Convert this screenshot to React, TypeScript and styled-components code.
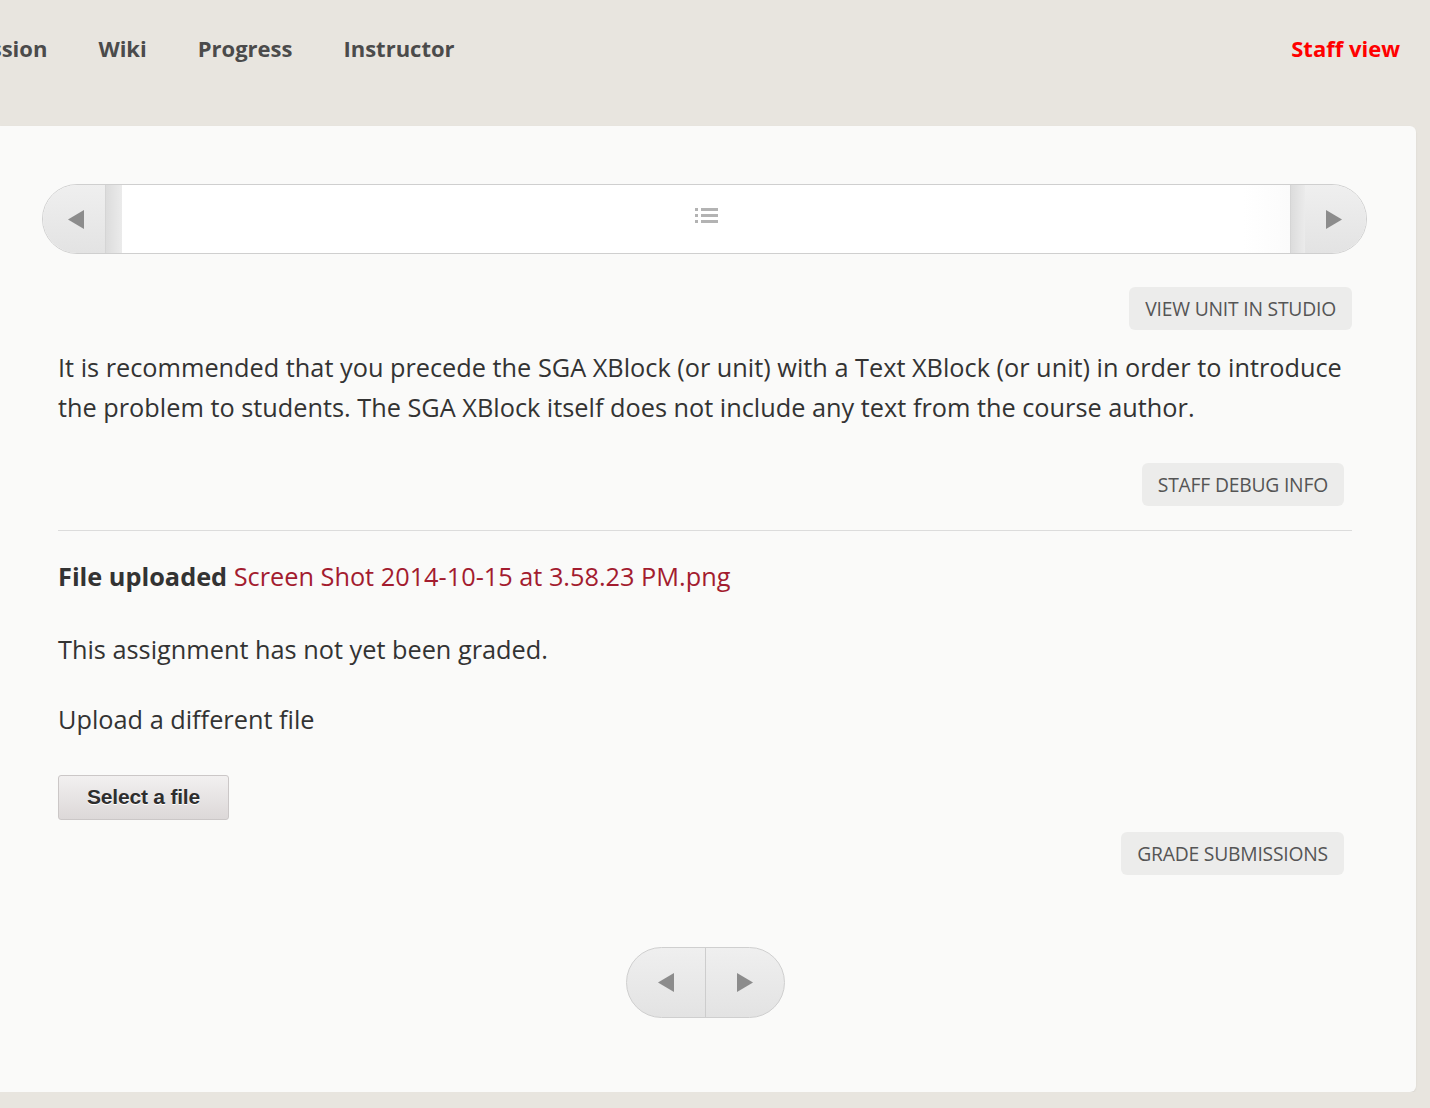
import React from "react";
import styled, { createGlobalStyle } from "styled-components";

const Global = createGlobalStyle`
  html, body { margin: 0; padding: 0; background: #e8e5df; }
  body { font-family: "Open Sans", "DejaVu Sans", sans-serif; overflow: hidden; }
  * { box-sizing: border-box; }
`;

const Header = styled.header`
  height: 126px;
  display: flex;
  align-items: flex-start;
  justify-content: space-between;
  padding: 32px 30px 0 0;
`;

const NavList = styled.nav`
  display: flex;
  gap: 51px;
  margin-left: -69px;
`;

const NavItem = styled.a`
  font-size: 22px;
  font-weight: 700;
  color: #4b4b4b;
  text-decoration: none;
  line-height: 32px;
`;

const StaffView = styled.a`
  font-size: 22px;
  font-weight: 700;
  color: #ff0000;
  text-decoration: none;
  line-height: 32px;
`;

const Card = styled.main`
  width: 1416px;
  height: 966px;
  background: #fafaf9;
  border-radius: 0 6px 6px 0;
  box-shadow: 0 1px 2px rgba(0, 0, 0, 0.08);
  padding: 58px 0 0 42px;
`;

const SeqNav = styled.div`
  width: 1325px;
  height: 70px;
  display: flex;
  border: 1px solid #cfcfcf;
  border-radius: 35px;
  overflow: hidden;
  background: #fff;
`;

const SeqButton = styled.button<{ $side: "left" | "right" }>`
  width: ${(p) => (p.$side === "left" ? 62 : 61)}px;
  border: none;
  padding: 0;
  padding-${(p) => (p.$side === "left" ? "left" : "right")}: 4px;
  background: linear-gradient(#efefef, #e3e3e3);
  display: flex;
  align-items: center;
  justify-content: center;
`;

const Strip = styled.div<{ $w: number }>`
  width: ${(p) => p.$w}px;
  background: linear-gradient(to right, #dcdcdc, #ebebeb);
  border-left: 1px solid #d5d5d5;
`;

const SeqMiddle = styled.div`
  flex: 1;
  display: flex;
  align-items: center;
  justify-content: center;
  padding-bottom: 6px;
  background: linear-gradient(to right, #fff 0, #fff 96%, #fbfbfb 100%);
`;

const Content = styled.div`
  width: 1294px;
  margin-left: 16px;
`;

const RightRow = styled.div<{ $mt: number; $mr?: number }>`
  display: flex;
  justify-content: flex-end;
  margin-top: ${(p) => p.$mt}px;
  padding-right: ${(p) => p.$mr ?? 0}px;
`;

const GreyButton = styled.button`
  height: 43px;
  padding: 0 16px;
  border: none;
  border-radius: 6px;
  background: #ececeb;
  color: #555;
  font-family: "Open Sans", sans-serif;
  font-size: 19.3px;
  letter-spacing: -0.2px;
`;

const Para = styled.p<{ $mt: number }>`
  margin: ${(p) => p.$mt}px 0 0;
  font-size: 25.3px;
  line-height: 40px;
  color: #333;
`;

const Rule = styled.hr`
  margin: 24px 0 0;
  border: none;
  border-top: 1px solid #dcdcdc;
`;

const Bold = styled.strong`
  font-weight: 700;
  color: #333;
`;

const FileLink = styled.a`
  color: #a31c2f;
  text-decoration: none;
`;

const SelectButton = styled.button`
  margin-top: 36px;
  width: 171px;
  height: 45px;
  padding: 0 0 2px;
  border: 1px solid #cbc7c7;
  border-radius: 3px;
  background: linear-gradient(#f2f0f0, #dcd8d8);
  font-family: "Liberation Sans", Arial, sans-serif;
  font-weight: 700;
  font-size: 21px;
  color: #2e2e2e;
  text-shadow: 0 1px 0 #fff;
  letter-spacing: -0.2px;
`;

const BottomNavWrap = styled.div`
  display: flex;
  justify-content: center;
  margin-top: 72px;
`;

const BottomNav = styled.div`
  width: 159px;
  height: 71px;
  display: flex;
  border: 1px solid #cfcfcf;
  border-radius: 36px;
  overflow: hidden;
  background: linear-gradient(#efefef, #e3e3e3);
`;

const BottomBtn = styled.button<{ $left?: boolean }>`
  flex: 1;
  border: none;
  background: transparent;
  display: flex;
  align-items: center;
  justify-content: center;
  padding: 0;
  ${(p) => (p.$left ? "border-right: 1px solid #cdcdcd;" : "")}
`;

const Tri = ({ dir }: { dir: "left" | "right" }) => (
  <svg width="16" height="19" viewBox="0 0 16 19">
    {dir === "left" ? (
      <polygon points="16,0 16,19 0,9.5" fill="#8c8c8c" />
    ) : (
      <polygon points="0,0 0,19 16,9.5" fill="#8c8c8c" />
    )}
  </svg>
);

const ListIcon = () => (
  <svg width="23" height="17" viewBox="0 0 23 17">
    <g fill="#b3b3b3">
      <rect x="0" y="0" width="3" height="3" />
      <rect x="0" y="6" width="3" height="3" />
      <rect x="0" y="12" width="3" height="3" />
      <rect x="6" y="0" width="17" height="3" />
      <rect x="6" y="6" width="17" height="3" />
      <rect x="6" y="12" width="17" height="3" />
    </g>
  </svg>
);

export default function App() {
  return (
    <>
      <Global />
      <Header>
        <NavList>
          <NavItem>Discussion</NavItem>
          <NavItem>Wiki</NavItem>
          <NavItem>Progress</NavItem>
          <NavItem>Instructor</NavItem>
        </NavList>
        <StaffView>Staff view</StaffView>
      </Header>
      <Card>
        <SeqNav>
          <SeqButton $side="left">
            <Tri dir="left" />
          </SeqButton>
          <Strip $w={17} />
          <SeqMiddle>
            <ListIcon />
          </SeqMiddle>
          <Strip $w={15} />
          <SeqButton $side="right">
            <Tri dir="right" />
          </SeqButton>
        </SeqNav>
        <Content>
          <RightRow $mt={33}>
            <GreyButton>VIEW UNIT IN STUDIO</GreyButton>
          </RightRow>
          <Para $mt={17}>
            It is recommended that you precede the SGA XBlock (or unit) with a Text XBlock (or unit) in order to introduce
            the problem to students. The SGA XBlock itself does not include any text from the course author.
          </Para>
          <RightRow $mt={36} $mr={8}>
            <GreyButton>STAFF DEBUG INFO</GreyButton>
          </RightRow>
          <Rule />
          <Para $mt={25}>
            <Bold>File uploaded</Bold> <FileLink>Screen Shot 2014-10-15 at 3.58.23 PM.png</FileLink>
          </Para>
          <Para $mt={33}>This assignment has not yet been graded.</Para>
          <Para $mt={30}>Upload a different file</Para>
          <SelectButton>Select a file</SelectButton>
          <RightRow $mt={12} $mr={8}>
            <GreyButton>GRADE SUBMISSIONS</GreyButton>
          </RightRow>
          <BottomNavWrap>
            <BottomNav>
              <BottomBtn $left>
                <Tri dir="left" />
              </BottomBtn>
              <BottomBtn>
                <Tri dir="right" />
              </BottomBtn>
            </BottomNav>
          </BottomNavWrap>
        </Content>
      </Card>
    </>
  );
}
